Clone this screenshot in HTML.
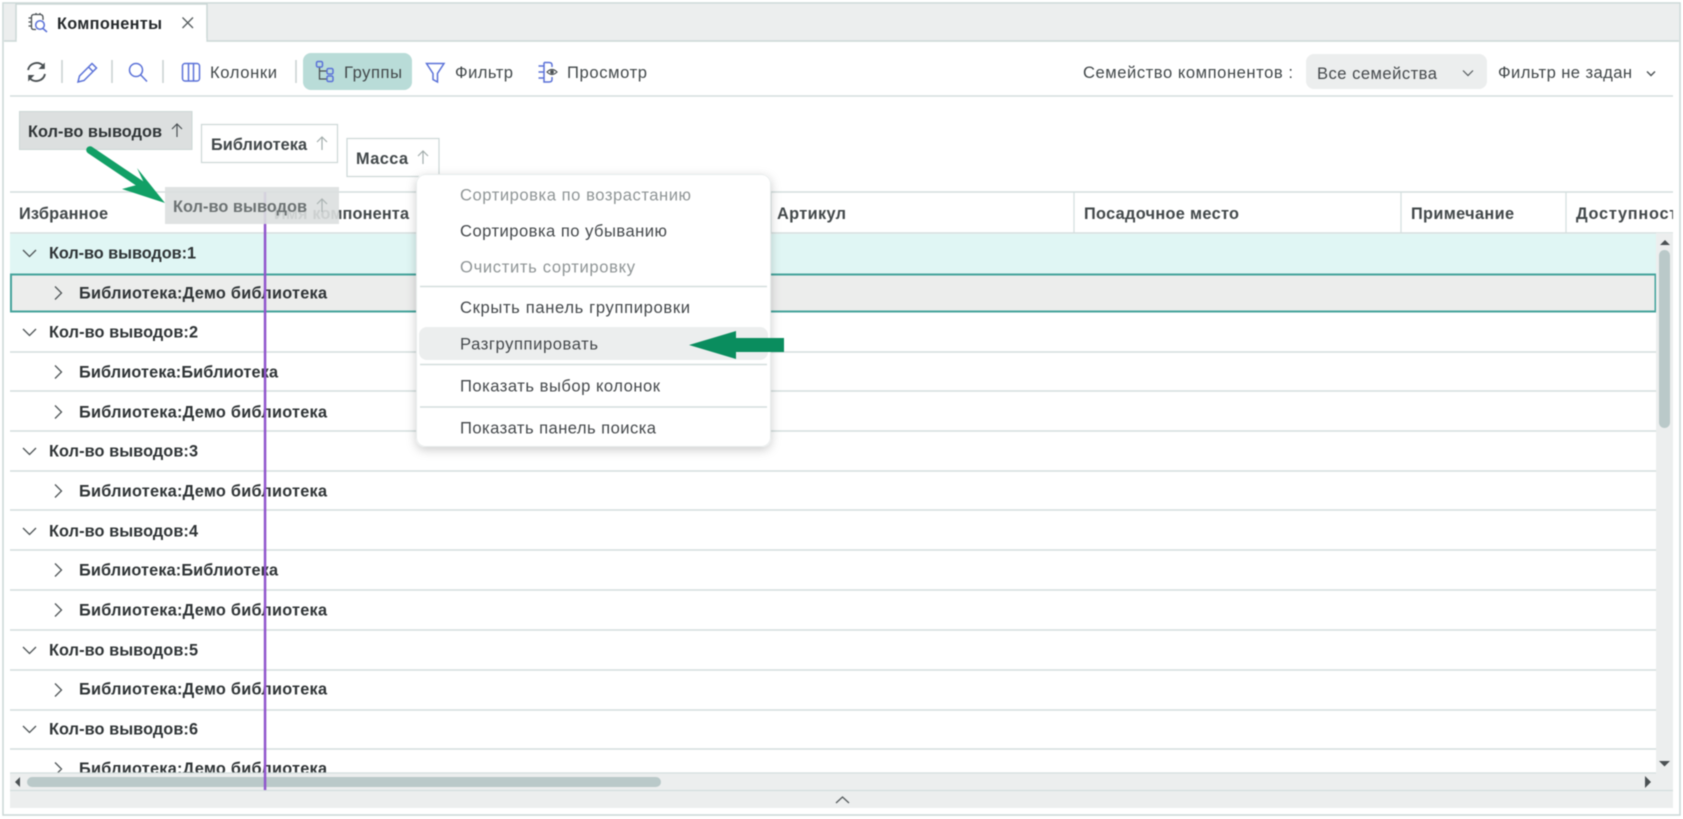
<!DOCTYPE html>
<html lang="ru"><head><meta charset="utf-8"><title>Компоненты</title>
<style>
html,body{margin:0;padding:0;background:#fff;width:1683px;height:819px;overflow:hidden}
svg{display:block;filter:blur(.45px)}
text{font-family:"Liberation Sans",sans-serif;font-size:16.6px;fill:#42484a}
.b{font-weight:bold;font-size:16.3px;fill:#2f3436}
.d{fill:#8f9596}
.m{fill:#45494c}
</style></head><body>
<svg width="1683" height="819" viewBox="0 0 1683 819" xmlns="http://www.w3.org/2000/svg">
<defs><clipPath id="hc"><rect x="1568" y="192" width="105" height="41"/></clipPath>
<clipPath id="rc"><rect x="10" y="233" width="1646" height="540"/></clipPath>
<filter id="sh" x="-10%" y="-10%" width="120%" height="125%"><feDropShadow dx="0" dy="3" stdDeviation="5" flood-color="#000" flood-opacity=".2"/></filter></defs>
<rect width="1683" height="819" fill="#fff"/>
<!-- window -->
<rect x="3" y="3" width="1677" height="812" fill="#fff" stroke="#cbd7d6" stroke-width="1.5"/>
<rect x="4" y="4" width="1675" height="37" fill="#eceeee"/>
<line x1="4" y1="41" x2="1679" y2="41" stroke="#cbd7d6" stroke-width="1.5"/>
<path d="M16 41V4H207V41" fill="#fff" stroke="#cbd7d6" stroke-width="1.5"/>
<rect x="16.8" y="38" width="189.5" height="4" fill="#fff"/>
<!-- tab icon -->
<path d="M34 14.500H40Q43 14.500 43 17.500V20M34 14.500Q31.500 14.500 31.500 17V27.500Q31.500 29.500 34 29.500H36M31.500 18H28.500M31.500 22H28.500M31.500 26H28.500M36 13V15M40 13V15" fill="none" stroke="#4a5053" stroke-width="1.3"/>
<circle cx="40" cy="25" r="4.300" fill="none" stroke="#5b72d8" stroke-width="1.500"/><path d="M43 28.500L47 32" stroke="#5b72d8" stroke-width="1.500"/>
<text class="b" x="57" y="28.800" textLength="105" lengthAdjust="spacing" style="fill:#25292b">Компоненты</text>
<path d="M182.500 17.500L193 28M193 17.500L182.500 28" stroke="#555b5d" stroke-width="1.300"/>
<!-- toolbar -->
<path d="M28 70A9 9 0 0 1 43 65.500M45 74A9 9 0 0 1 30 78.500" fill="none" stroke="#4a5053" stroke-width="1.900"/>
<path d="M44.800 62.500V69H38.500ZM28.200 81.500V75H34.500Z" fill="#4a5053"/>
<g stroke="#c8d0d0" stroke-width="1.500"><line x1="62" y1="60" x2="62" y2="83"/><line x1="112" y1="60" x2="112" y2="83"/><line x1="163" y1="60" x2="163" y2="83"/><line x1="296" y1="60" x2="296" y2="83"/></g>
<g fill="none" stroke="#5b72d8" stroke-width="1.500">
<path d="M92 63.500L96.500 68L84 80.500L78 82L79.500 76ZM88.500 67L93 71.500"/>
<circle cx="136" cy="70" r="6.500"/><path d="M140.800 75L147 81.500"/>
<rect x="182.500" y="63.500" width="17" height="17.500" rx="2.500"/><path d="M188.500 63.500V81M193.500 63.500V81"/>
<path d="M426.500 63.500H444L437.500 73.500V82L433 79.500V73.500Z"/>
<path d="M544 62.500H549Q552 62.500 552 65V67M552 77V79.500Q552 82 549 82H544V62.500M544 66H538.500M544 72H538.500M544 78H538.500"/>
</g>
<text x="210" y="77.800" textLength="67" lengthAdjust="spacing">Колонки</text>
<rect x="303" y="53" width="109" height="37" rx="8" fill="#b9dcd8"/>
<path d="M319.500 67V79H327M319.500 71H327" fill="none" stroke="#4a5053" stroke-width="1.300"/>
<rect x="316.500" y="61.500" width="6" height="5.500" rx="1.500" fill="none" stroke="#5b72d8" stroke-width="1.500"/><rect x="327" y="68.500" width="6" height="5.500" rx="1.500" fill="none" stroke="#5b72d8" stroke-width="1.500"/><rect x="327" y="76" width="6" height="5.500" rx="1.500" fill="none" stroke="#5b72d8" stroke-width="1.500"/>
<text x="344" y="77.800" textLength="58" lengthAdjust="spacing">Группы</text>
<text x="455" y="77.800" textLength="58" lengthAdjust="spacing">Фильтр</text>
<path d="M547 72Q552 67 557 72Q552 77 547 72Z" fill="none" stroke="#4a5053" stroke-width="1.200"/><circle cx="552" cy="72" r="1.900" fill="#4a5053"/>
<text x="567" y="77.800" textLength="80" lengthAdjust="spacing">Просмотр</text>
<text x="1083" y="77.800" textLength="210" lengthAdjust="spacing">Семейство компонентов :</text>
<rect x="1306" y="54" width="181" height="35" rx="8" fill="#eceeee"/>
<text x="1317" y="78.800" textLength="120" lengthAdjust="spacing" class="m">Все семейства</text>
<path d="M1463 70.500L1468 75.500L1473 70.500" fill="none" stroke="#555b5d" stroke-width="1.200"/>
<text x="1498" y="78" textLength="134" lengthAdjust="spacing">Фильтр не задан</text>
<path d="M1647 71.500L1651 75.500L1655 71.500" fill="none" stroke="#4a5053" stroke-width="1.400"/>
<line x1="10" y1="96" x2="1673" y2="96" stroke="#d3dedd" stroke-width="1.500"/>
<!-- group chips -->
<rect x="19.500" y="111.500" width="172.500" height="38" fill="#dcdfdf" stroke="#ccd7d6"/>
<text class="b" x="28" y="136.800" textLength="134" lengthAdjust="spacing">Кол-во выводов</text>
<path d="M177 137V124M172 129L177 124L182 129" fill="none" stroke="#4a5053" stroke-width="1.200"/>
<rect x="201.500" y="124.500" width="136" height="38" fill="#fff" stroke="#ccd7d6" stroke-width="1.200"/>
<text class="b" x="211" y="149.800" textLength="96" lengthAdjust="spacing" style="fill:#42484a">Библиотека</text>
<path d="M322 150V137M317 142L322 137L327 142" fill="none" stroke="#a3adac" stroke-width="1.200"/>
<rect x="347" y="138.500" width="92" height="38" fill="#fff" stroke="#ccd7d6" stroke-width="1.200"/>
<text class="b" x="356" y="163.800" textLength="52" lengthAdjust="spacing" style="fill:#42484a">Масса</text>
<path d="M423 164V151M418 156L423 151L428 156" fill="none" stroke="#a3adac" stroke-width="1.200"/>
<!-- header -->
<line x1="10" y1="192" x2="1673" y2="192" stroke="#d3dedd" stroke-width="1.500"/>
<line x1="10" y1="233" x2="1673" y2="233" stroke="#d3dedd" stroke-width="1.500"/>
<g stroke="#d3dedd" stroke-width="1.200"><line x1="771" y1="192" x2="771" y2="233"/><line x1="1074" y1="192" x2="1074" y2="233"/><line x1="1401" y1="192" x2="1401" y2="233"/><line x1="1566" y1="192" x2="1566" y2="233"/></g>
<text class="b" x="19" y="218.800" textLength="89" lengthAdjust="spacing" style="fill:#42484a">Избранное</text>
<text class="b" x="274" y="218.800" textLength="135" lengthAdjust="spacing" style="fill:#42484a">Имя компонента</text>
<text class="b" x="777" y="218.800" textLength="69" lengthAdjust="spacing" style="fill:#42484a">Артикул</text>
<text class="b" x="1084" y="218.800" textLength="155" lengthAdjust="spacing" style="fill:#42484a">Посадочное место</text>
<text class="b" x="1411" y="218.800" textLength="103" lengthAdjust="spacing" style="fill:#42484a">Примечание</text>
<g clip-path="url(#hc)"><text class="b" x="1576" y="218.800" textLength="112" lengthAdjust="spacing" style="fill:#42484a">Доступность</text></g>
<!-- rows -->
<rect x="10" y="234" width="1646" height="40" fill="#e0f6f4"/>
<rect x="11" y="274.500" width="1644.500" height="37" fill="#ecedec" stroke="#44a39b" stroke-width="2"/>
<g stroke="#d3dedd" stroke-width="1.500"><line x1="10" y1="352" x2="1656" y2="352"/><line x1="10" y1="391" x2="1656" y2="391"/><line x1="10" y1="431" x2="1656" y2="431"/><line x1="10" y1="471" x2="1656" y2="471"/><line x1="10" y1="510" x2="1656" y2="510"/><line x1="10" y1="550" x2="1656" y2="550"/><line x1="10" y1="590" x2="1656" y2="590"/><line x1="10" y1="630" x2="1656" y2="630"/><line x1="10" y1="670" x2="1656" y2="670"/><line x1="10" y1="710" x2="1656" y2="710"/><line x1="10" y1="749" x2="1656" y2="749"/></g>
<g clip-path="url(#rc)">
<g class="rows">
<text class="b" x="49" y="258.500" textLength="147" lengthAdjust="spacing">Кол-во выводов:1</text>
<text class="b" x="79" y="298.500" textLength="248" lengthAdjust="spacing">Библиотека:Демо библиотека</text>
<text class="b" x="49" y="337.500" textLength="149" lengthAdjust="spacing">Кол-во выводов:2</text>
<text class="b" x="79" y="377.500" textLength="199" lengthAdjust="spacing">Библиотека:Библиотека</text>
<text class="b" x="79" y="417.500" textLength="248" lengthAdjust="spacing">Библиотека:Демо библиотека</text>
<text class="b" x="49" y="456.500" textLength="149" lengthAdjust="spacing">Кол-во выводов:3</text>
<text class="b" x="79" y="496.500" textLength="248" lengthAdjust="spacing">Библиотека:Демо библиотека</text>
<text class="b" x="49" y="536.500" textLength="149" lengthAdjust="spacing">Кол-во выводов:4</text>
<text class="b" x="79" y="575.500" textLength="199" lengthAdjust="spacing">Библиотека:Библиотека</text>
<text class="b" x="79" y="615.500" textLength="248" lengthAdjust="spacing">Библиотека:Демо библиотека</text>
<text class="b" x="49" y="655.500" textLength="149" lengthAdjust="spacing">Кол-во выводов:5</text>
<text class="b" x="79" y="694.500" textLength="248" lengthAdjust="spacing">Библиотека:Демо библиотека</text>
<text class="b" x="49" y="734.500" textLength="149" lengthAdjust="spacing">Кол-во выводов:6</text>
<text class="b" x="79" y="774" textLength="248" lengthAdjust="spacing">Библиотека:Демо библиотека</text>
</g>
<g fill="none" stroke="#4f5557" stroke-width="1.300">
<path d="M23 250L29.500 256.500L36 250M23 329L29.500 335.500L36 329M23 448L29.500 454.500L36 448M23 528L29.500 534.500L36 528M23 647L29.500 653.500L36 647M23 726L29.500 732.500L36 726"/>
<path d="M55 286.500L61.500 293L55 299.500M55 365.500L61.500 372L55 378.500M55 405.500L61.500 412L55 418.500M55 484.500L61.500 491L55 497.500M55 563.500L61.500 570L55 576.500M55 603.500L61.500 610L55 616.500M55 683.500L61.500 690L55 696.500M55 762.500L61.500 769L55 775.500"/>
</g>
</g>
<!-- scrollbars -->
<rect x="1656" y="233" width="17" height="557" fill="#eceeee"/>
<rect x="1659" y="250" width="11" height="178" rx="5.500" fill="#bac9c9"/>
<path d="M1660 245L1665 240L1670 245Z" fill="#4a5053"/>
<path d="M1659 761H1670L1664.500 766.500Z" fill="#4a5053"/>
<rect x="10" y="773" width="1646" height="17" fill="#eceeee"/>
<line x1="10" y1="773" x2="1656" y2="773" stroke="#d3dedd" stroke-width="1.200"/>
<rect x="27" y="777" width="634" height="10" rx="5" fill="#bac9c9"/>
<path d="M20 777V787L15 782Z" fill="#4a5053"/>
<path d="M1645 776V788L1651 782Z" fill="#4a5053"/>
<rect x="10" y="791" width="1663" height="17" fill="#eceeee"/>
<line x1="10" y1="790.500" x2="1673" y2="790.500" stroke="#d3dedd" stroke-width="1.200"/>
<path d="M836 803L842.500 797L849 803" fill="none" stroke="#555b5d" stroke-width="1.300"/>
<!-- purple line -->
<rect x="263.800" y="224" width="2.500" height="566" fill="#9055cc"/>
<!-- ghost -->
<rect x="263.800" y="192" width="2.500" height="32" fill="#9055cc"/>
<rect x="165" y="187" width="174" height="37" fill="#dcdfdf" fill-opacity=".9"/>
<text class="b" x="173" y="211.800" textLength="134" lengthAdjust="spacing" style="fill:#6c7273">Кол-во выводов</text>
<path d="M322 212V199M317 204L322 199L327 204" fill="none" stroke="#aab3b2" stroke-width="1.200"/>
<!-- green diagonal arrow -->
<path d="M90 150L142 185" stroke="#12a066" stroke-width="7.500" stroke-linecap="round"/>
<path d="M137 168L165 203L122 189L144 183Z" fill="#12a066"/>
<!-- menu -->
<rect x="416" y="174" width="355" height="273" rx="9" fill="#fff" filter="url(#sh)"/>
<rect x="416.500" y="174.500" width="354" height="272" rx="9" fill="#fff" stroke="#e8ecec"/>
<text class="d" x="460" y="200.500" textLength="231" lengthAdjust="spacing">Сортировка по возрастанию</text>
<text class="m" x="460" y="236.500" textLength="207" lengthAdjust="spacing">Сортировка по убыванию</text>
<text class="d" x="460" y="272.500" textLength="175" lengthAdjust="spacing">Очистить сортировку</text>
<line x1="420" y1="286.500" x2="767" y2="286.500" stroke="#d3dedd" stroke-width="1.500"/>
<text class="m" x="460" y="313" textLength="230" lengthAdjust="spacing">Скрыть панель группировки</text>
<rect x="419" y="327" width="349" height="33" rx="8" fill="#eceeee"/>
<text class="m" x="460" y="349.500" textLength="138" lengthAdjust="spacing">Разгруппировать</text>
<line x1="420" y1="364.500" x2="767" y2="364.500" stroke="#d3dedd" stroke-width="1.500"/>
<text class="m" x="460" y="391.500" textLength="200" lengthAdjust="spacing">Показать выбор колонок</text>
<line x1="420" y1="407" x2="767" y2="407" stroke="#d3dedd" stroke-width="1.500"/>
<text class="m" x="460" y="433.500" textLength="196" lengthAdjust="spacing">Показать панель поиска</text>
<!-- green left arrow -->
<path d="M689 345L736 331V338H784V352H736V359Z" fill="#0a8d5e"/>
</svg>
</body></html>
